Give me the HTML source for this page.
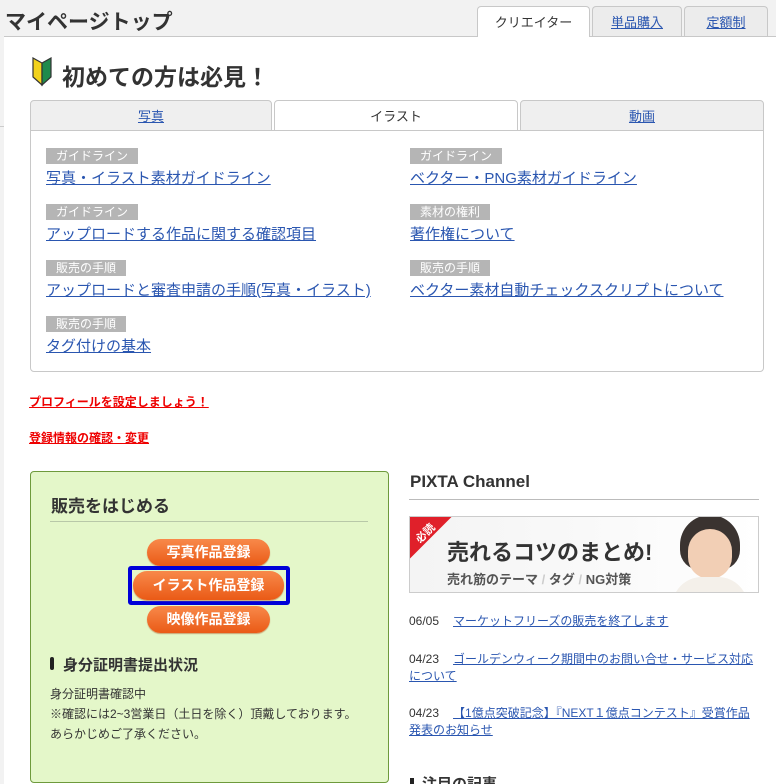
<!DOCTYPE html>
<html style="overflow:hidden;height:784px"><head><meta charset="utf-8"><style>
*{margin:0;padding:0;box-sizing:border-box}
body{width:776px;height:784px;overflow:hidden;background:#f2f2f2;font-family:"Liberation Sans","Noto Sans CJK JP",sans-serif;position:relative;color:#333}
.a{position:absolute}
a{color:#2a56b0;text-decoration:underline}
.tab{position:absolute;top:6px;height:30px;border:1px solid #c8c8c8;border-bottom:none;border-radius:4px 4px 0 0;background:#ececec;font-size:13px;text-align:center;line-height:32px}
.it{position:absolute;top:100px;height:31px;border:1px solid #c8c8c8;border-radius:4px 4px 0 0;background:#efefef;font-size:13px;text-align:center;line-height:31px}
.lb{position:absolute;background:#b5b5b5;color:#fff;font-size:12px;line-height:16px;height:16px;padding:0 10px}
.lk{position:absolute;font-size:15px;white-space:nowrap}
.btn{position:absolute;border-radius:14px;background:linear-gradient(#f8894a,#ea5a16);color:#fff;font-weight:bold;font-size:14px;text-align:center;box-shadow:0 1px 1px #c9a070}
.nw{position:absolute;left:409px;font-size:12px;line-height:17px;width:350px}
.nw span{color:#333;margin-right:14px}
</style></head><body>
<div class="a" style="left:4px;top:36px;width:772px;height:748px;background:#fff;border-top:1px solid #c8c8c8"></div>
<div class="a" style="left:0;top:126px;width:4px;height:1px;background:#ccc"></div>
<div class="a" style="left:5px;top:6px;font-size:21px;font-weight:bold;color:#333">マイページトップ</div>
<div class="tab" style="left:477px;width:113px;background:#fff;height:31px;color:#333">クリエイター</div>
<div class="tab" style="left:592px;width:90px"><a href="#">単品購入</a></div>
<div class="tab" style="left:684px;width:84px"><a href="#">定額制</a></div>
<svg class="a" style="left:31px;top:57px" width="22" height="30" viewBox="0 0 22 30"><path d="M11 6 L2 1 L2 20 L11 28 Z" fill="#f2d21b" stroke="#333" stroke-width="1.2"/><path d="M11 6 L20 1 L20 20 L11 28 Z" fill="#1f8a4c" stroke="#333" stroke-width="1.2"/></svg>
<div class="a" style="left:62px;top:58px;font-size:23px;font-weight:bold;color:#333">初めての方は必見！</div>
<div class="it" style="left:30px;width:242px"><a href="#">写真</a></div>
<div class="it" style="left:274px;width:244px;background:#fff;height:32px;color:#333">イラスト</div>
<div class="it" style="left:520px;width:244px"><a href="#">動画</a></div>
<div class="a" style="left:30px;top:130px;width:734px;height:242px;border:1px solid #c8c8c8;border-radius:0 0 4px 4px;background:#fff"></div>
<div class="lb" style="left:46px;top:148px">ガイドライン</div><a class="lk" href="#" style="left:46px;top:167px">写真・イラスト素材ガイドライン</a>
<div class="lb" style="left:46px;top:204px">ガイドライン</div><a class="lk" href="#" style="left:46px;top:223px">アップロードする作品に関する確認項目</a>
<div class="lb" style="left:46px;top:260px">販売の手順</div><a class="lk" href="#" style="left:46px;top:279px">アップロードと審査申請の手順(写真・イラスト)</a>
<div class="lb" style="left:46px;top:316px">販売の手順</div><a class="lk" href="#" style="left:46px;top:335px">タグ付けの基本</a>
<div class="lb" style="left:410px;top:148px">ガイドライン</div><a class="lk" href="#" style="left:410px;top:167px">ベクター・PNG素材ガイドライン</a>
<div class="lb" style="left:410px;top:204px">素材の権利</div><a class="lk" href="#" style="left:410px;top:223px">著作権について</a>
<div class="lb" style="left:410px;top:260px">販売の手順</div><a class="lk" href="#" style="left:410px;top:279px">ベクター素材自動チェックスクリプトについて</a>
<a class="a" href="#" style="left:29px;top:393px;font-size:12px;font-weight:bold;color:#e00">プロフィールを設定しましょう！</a>
<a class="a" href="#" style="left:29px;top:429px;font-size:12px;font-weight:bold;color:#e00">登録情報の確認・変更</a>
<div class="a" style="left:30px;top:471px;width:359px;height:312px;background:#e4f7c9;border:1px solid #6e9a3c;border-radius:4px"></div>
<div class="a" style="left:51px;top:492px;font-size:17px;font-weight:bold;color:#333">販売をはじめる</div>
<div class="a" style="left:50px;top:521px;width:318px;height:1px;background:#b8c8a8"></div>
<div class="btn" style="left:147px;top:539px;width:123px;height:27px;line-height:27px">写真作品登録</div>
<div class="a" style="left:128px;top:566px;width:162px;height:39px;border:4px solid #0000d8;border-radius:3px"></div>
<div class="btn" style="left:133px;top:571px;width:151px;height:29px;line-height:29px">イラスト作品登録</div>
<div class="btn" style="left:147px;top:606px;width:123px;height:27px;line-height:27px">映像作品登録</div>
<div class="a" style="left:50px;top:657px;width:4px;height:13px;background:#222;border-radius:2px"></div>
<div class="a" style="left:63px;top:654px;font-size:15px;font-weight:bold;color:#333">身分証明書提出状況</div>
<div class="a" style="left:50px;top:684px;font-size:12px;line-height:20px;color:#333">身分証明書確認中<br>※確認には2~3営業日（土日を除く）頂戴しております。<br>あらかじめご了承ください。</div>
<div class="a" style="left:410px;top:472px;font-size:17px;font-weight:bold;color:#333">PIXTA Channel</div>
<div class="a" style="left:409px;top:499px;width:350px;height:1px;background:#bbb"></div>
<div class="a" style="left:409px;top:516px;width:350px;height:77px;border:1px solid #ccc;background:linear-gradient(90deg,#f4f4f4,#fafafa 60%,#fff);overflow:hidden">
<div class="a" style="left:-30px;top:-12px;width:80px;height:36px;background:#e0202a;transform:rotate(-45deg)"></div>
<div class="a" style="left:4px;top:8px;color:#fff;font-size:11px;font-weight:bold;transform:rotate(-45deg)">必読</div>
<div class="a" style="left:37px;top:18px;font-size:22px;font-weight:bold;color:#333">売れるコツのまとめ!</div>
<div class="a" style="left:37px;top:52px;font-size:13px;font-weight:bold;color:#555">売れ筋のテーマ <span style="color:#ccc">/</span> タグ <span style="color:#ccc">/</span> NG対策</div>
<div class="a" style="left:270px;top:-2px;width:60px;height:55px;border-radius:30px 30px 20px 20px;background:#3a3330"></div>
<div class="a" style="left:278px;top:12px;width:44px;height:50px;border-radius:22px;background:#f2cfb5"></div>
<div class="a" style="left:262px;top:60px;width:76px;height:30px;border-radius:30px 30px 0 0;background:#f4f0ea"></div>
</div>
<div class="nw" style="top:613px"><span>06/05</span><a href="#">マーケットフリーズの販売を終了します</a></div>
<div class="nw" style="top:651px"><span>04/23</span><a href="#">ゴールデンウィーク期間中のお問い合せ・サービス対応について</a></div>
<div class="nw" style="top:705px"><span>04/23</span><a href="#">【1億点突破記念】『NEXT１億点コンテスト』受賞作品発表のお知らせ</a></div>
<div class="a" style="left:410px;top:778px;width:4px;height:6px;background:#222"></div>
<div class="a" style="left:422px;top:773px;font-size:15px;font-weight:bold;color:#333">注目の記事</div>
</body></html>
